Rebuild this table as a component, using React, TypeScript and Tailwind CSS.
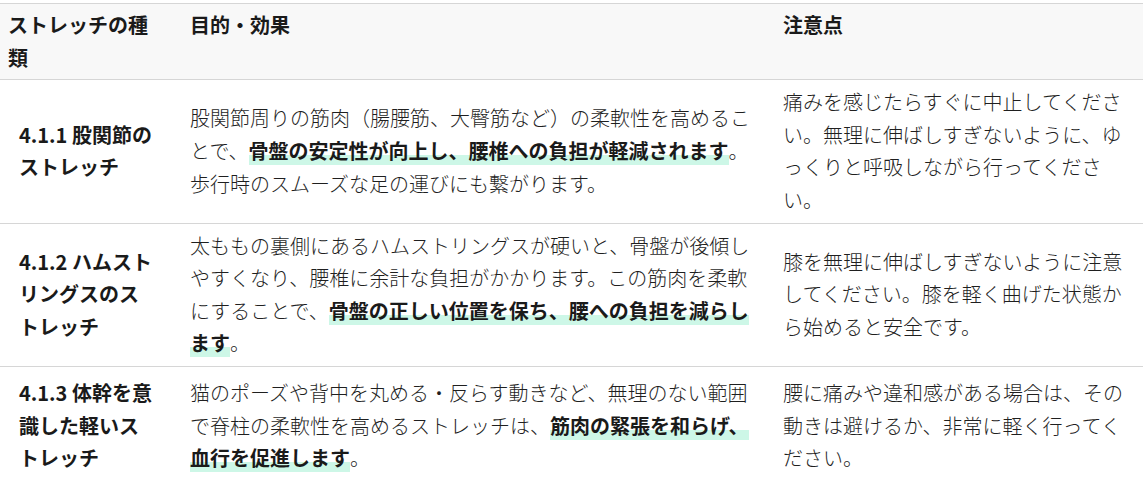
import React from "react";

const hl = "font-bold text-[#1a1a1a] bg-[linear-gradient(transparent_64%,#cdf7e7_64%)]";

function Mark({ children }: { children: React.ReactNode }) {
  return <strong className={hl}>{children}</strong>;
}

const rows: { name: string; purpose: React.ReactNode; note: string }[] = [
  {
    name: "4.1.1 股関節のストレッチ",
    purpose: (
      <>
        股関節周りの筋肉（腸腰筋、大臀筋など）の柔軟性を高めることで、
        <Mark>骨盤の安定性が向上し、腰椎への負担が軽減されます</Mark>
        。歩行時のスムーズな足の運びにも繋がります。
      </>
    ),
    note: "痛みを感じたらすぐに中止してください。無理に伸ばしすぎないように、ゆっくりと呼吸しながら行ってください。",
  },
  {
    name: "4.1.2 ハムストリングスのストレッチ",
    purpose: (
      <>
        太ももの裏側にあるハムストリングスが硬いと、骨盤が後傾しやすくなり、腰椎に余計な負担がかかります。この筋肉を柔軟にすることで、
        <Mark>骨盤の正しい位置を保ち、腰への負担を減らします</Mark>。
      </>
    ),
    note: "膝を無理に伸ばしすぎないように注意してください。膝を軽く曲げた状態から始めると安全です。",
  },
  {
    name: "4.1.3 体幹を意識した軽いストレッチ",
    purpose: (
      <>
        猫のポーズや背中を丸める・反らす動きなど、無理のない範囲で脊柱の柔軟性を高めるストレッチは、
        <Mark>筋肉の緊張を和らげ、血行を促進します</Mark>。
      </>
    ),
    note: "腰に痛みや違和感がある場合は、その動きは避けるか、非常に軽く行ってください。",
  },
];

export default function App() {
  return (
    <div
      className="w-[1143px] h-[484px] bg-white pt-[3px] text-[20px] leading-[1.63] font-light text-[#1f1f1f]"
      style={{ fontFamily: '"Noto Sans CJK JP", "Noto Sans", sans-serif' }}
    >
      <table className="w-full table-fixed border-collapse">
        <colgroup>
          <col className="w-[163px]" />
          <col className="w-[606px]" />
          <col />
        </colgroup>
        <thead>
          <tr className="bg-[#f8f8f8] border-y border-[#d6d6d6]">
            <th className="text-left align-top font-bold text-[#1a1a1a] pl-2 pr-2 py-[5px]">ストレッチの種類</th>
            <th className="text-left align-top font-bold text-[#1a1a1a] pl-[27px] pr-[14px] py-[5px]">目的・効果</th>
            <th className="text-left align-top font-bold text-[#1a1a1a] pl-[14px] pr-[14px] py-[5px]">注意点</th>
          </tr>
        </thead>
        <tbody>
          {rows.map((r) => (
            <tr key={r.name} className="border-b border-[#d6d6d6]">
              <td className="align-middle font-bold text-[#1a1a1a] pl-[19px] pr-2 py-[10px]">{r.name}</td>
              <td className="align-middle pl-[27px] pr-[14px] py-[6px]">{r.purpose}</td>
              <td className="align-middle pl-[14px] pr-[14px] py-[6px]">{r.note}</td>
            </tr>
          ))}
        </tbody>
      </table>
    </div>
  );
}
